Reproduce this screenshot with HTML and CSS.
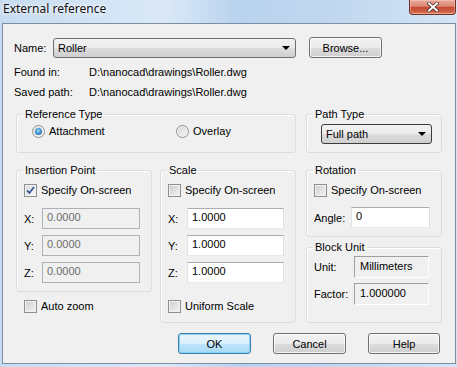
FILE: index.html
```html
<!DOCTYPE html>
<html>

<head>
    <title>External reference</title>
    <link rel="stylesheet" href="styles.css">
</head>

<body>
    <div class="window">
        <div class="titlebar">
            <span class="title">External reference</span>
            <button class="close-btn" title="Close">
                <svg width="12" height="10" viewBox="0 0 12 10">
                    <path d="M2 1.5 L10 8.5 M10 1.5 L2 8.5" stroke="#4a2a24" stroke-width="3.6" stroke-linecap="square" />
                    <path d="M2 1.5 L10 8.5 M10 1.5 L2 8.5" stroke="#ffffff" stroke-width="2" stroke-linecap="square" />
                </svg>
            </button>
        </div>

        <div class="panel">
            <div class="name-row">
                <label class="name-label">Name:</label>
                <div class="combo name-combo">
                    <span>Roller</span>
                    <i class="arrow"></i>
                </div>
                <button class="btn browse-btn">Browse...</button>
            </div>

            <div class="info-row found-row">
                <span class="info-label">Found in:</span>
                <span>D:\nanocad\drawings\Roller.dwg</span>
            </div>
            <div class="info-row">
                <span class="info-label">Saved path:</span>
                <span>D:\nanocad\drawings\Roller.dwg</span>
            </div>

            <div class="top-groups">
                <fieldset class="group ref-type">
                    <legend>Reference Type</legend>
                    <div class="radio-row">
                        <label class="radio attach"><span class="radio-dot checked"></span>Attachment</label>
                        <label class="radio"><span class="radio-dot"></span>Overlay</label>
                    </div>
                </fieldset>
                <fieldset class="group path-type">
                    <legend>Path Type</legend>
                    <div class="combo path-combo">
                        <span>Full path</span>
                        <i class="arrow"></i>
                    </div>
                </fieldset>
            </div>

            <div class="lower-groups">
                <div class="column">
                    <fieldset class="group insertion">
                        <legend>Insertion Point</legend>
                        <label class="check-row"><span class="checkbox checked"><svg width="9" height="9" viewBox="0 0 9 9"><path d="M1 4.5 L3.5 7 L8 1" fill="none" stroke="#3d5a98" stroke-width="1.8" /></svg></span>Specify On-screen</label>
                        <div class="coord-row"><span class="coord-label">X:</span><input class="field disabled" value="0.0000" disabled></div>
                        <div class="coord-row"><span class="coord-label">Y:</span><input class="field disabled" value="0.0000" disabled></div>
                        <div class="coord-row"><span class="coord-label">Z:</span><input class="field disabled" value="0.0000" disabled></div>
                    </fieldset>
                    <label class="check-row auto-zoom"><span class="checkbox"></span>Auto zoom</label>
                </div>

                <fieldset class="group scale">
                    <legend>Scale</legend>
                    <label class="check-row"><span class="checkbox"></span>Specify On-screen</label>
                    <div class="coord-row"><span class="coord-label">X:</span><input class="field" value="1.0000"></div>
                    <div class="coord-row"><span class="coord-label">Y:</span><input class="field" value="1.0000"></div>
                    <div class="coord-row"><span class="coord-label">Z:</span><input class="field" value="1.0000"></div>
                    <label class="check-row uniform"><span class="checkbox"></span>Uniform Scale</label>
                </fieldset>

                <div class="column">
                    <fieldset class="group rotation">
                        <legend>Rotation</legend>
                        <label class="check-row"><span class="checkbox"></span>Specify On-screen</label>
                        <div class="coord-row"><span class="angle-label">Angle:</span><input class="field angle-field" value="0"></div>
                    </fieldset>
                    <fieldset class="group block-unit">
                        <legend>Block Unit</legend>
                        <div class="unit-row"><span class="unit-label">Unit:</span><span class="static-field">Millimeters</span></div>
                        <div class="unit-row"><span class="unit-label">Factor:</span><span class="static-field">1.000000</span></div>
                    </fieldset>
                </div>
            </div>

            <div class="buttons">
                <button class="btn default-btn">OK</button>
                <button class="btn">Cancel</button>
                <button class="btn help-btn">Help</button>
            </div>
        </div>
    </div>
</body>

</html>
```

FILE: styles.css
```css
* {
    margin: 0;
    padding: 0;
    box-sizing: border-box;
}

body {
    font-family: "Liberation Sans", Arial, sans-serif;
    font-size: 11px;
    color: #000;
    background: #c4daf1;
    width: 457px;
    height: 367px;
    overflow: hidden;
}

.window {
    width: 457px;
    height: 367px;
    background: linear-gradient(90deg, #c7dcf1 0%, #d6e6f6 28%, #dbe9f7 36%, #b9d3ee 52%, #c0d7ef 72%, #d3e4f5 100%);
}

.titlebar {
    height: 23px;
    display: flex;
    align-items: flex-start;
    justify-content: space-between;
}

.title {
    font-family: "Noto Sans", "Open Sans", sans-serif;
    font-size: 12px;
    line-height: 18px;
    margin-left: 3px;
    color: #111;
    text-shadow: 0 0 6px #fff, 0 0 3px #fff;
}

.close-btn {
    width: 47px;
    height: 15px;
    margin-right: 1px;
    border: 1px solid #6e2f25;
    border-top: none;
    border-radius: 0 0 4px 4px;
    background: linear-gradient(#e8aa9b 0%, #dc8572 45%, #c54a31 52%, #cf5f44 85%, #e08a6f 100%);
    box-shadow: inset 0 0 0 1px rgba(255, 210, 200, 0.45);
    display: flex;
    align-items: center;
    justify-content: center;
}

.panel {
    margin-left: 2px;
    width: 454px;
    height: 341px;
    border: 1px solid #7e8fa3;
    background: #f0f0f0;
}

/* name + browse */
.name-row {
    display: flex;
    align-items: center;
    margin: 13px 0 0 11px;
    height: 21px;
}

.name-label {
    width: 39px;
}

.combo {
    display: flex;
    align-items: center;
    justify-content: space-between;
    height: 20px;
    padding: 0 5px 0 4px;
    border: 1px solid #707070;
    border-radius: 3px;
    background: linear-gradient(#f2f2f2 0%, #ebebeb 50%, #dddddd 51%, #cfcfcf 100%);
}

.name-combo {
    width: 243px;
}

.arrow {
    width: 0;
    height: 0;
    border-left: 4px solid transparent;
    border-right: 4px solid transparent;
    border-top: 4px solid #000;
}

.btn {
    font-family: inherit;
    font-size: 11px;
    color: #000;
    width: 73px;
    height: 21px;
    border: 1px solid #707070;
    border-radius: 3px;
    background: linear-gradient(#f2f2f2 0%, #ebebeb 50%, #dddddd 51%, #cfcfcf 100%);
    box-shadow: inset 0 0 0 1px rgba(255, 255, 255, 0.7);
}

.browse-btn {
    margin-left: 13px;
}

.info-row {
    display: flex;
    margin-left: 11px;
    line-height: 20px;
}

.found-row {
    margin-top: 4px;
}

.info-label {
    width: 75px;
}

/* group boxes */
.group {
    border: 1px solid #d5dfe5;
    border-radius: 3px;
    box-shadow: inset 1px 1px 0 #fff;
    min-width: 0;
}

.group legend {
    line-height: 14px;
    margin-left: 6px;
    padding: 0 2px;
}

.top-groups {
    display: flex;
    margin: 5px 0 0 13px;
}

.ref-type {
    width: 280px;
    height: 46px;
}

.path-type {
    width: 136px;
    height: 46px;
    margin-left: 10px;
}

.radio-row {
    display: flex;
    height: 20px;
    align-items: center;
    padding-left: 15px;
}

.radio {
    display: flex;
    align-items: center;
    gap: 4px;
}

.radio.attach {
    width: 144px;
}

.radio-dot {
    width: 13px;
    height: 13px;
    border-radius: 50%;
    border: 1px solid #8e8f8f;
    background: linear-gradient(135deg, #d4d4d4, #f8f8f8);
    box-shadow: inset 0 0 0 1px #f4f4f4;
    display: flex;
    align-items: center;
    justify-content: center;
}

.radio-dot.checked::after {
    content: "";
    width: 7px;
    height: 7px;
    border-radius: 50%;
    background: radial-gradient(circle at 45% 40%, #a7def8 0%, #3b8ed0 50%, #194f88 100%);
}

.path-combo {
    width: 111px;
    margin: 3px 0 0 14px;
    border-color: #3c3c3c;
}

/* lower part */
.lower-groups {
    display: flex;
    align-items: flex-start;
    margin: 10px 0 0 13px;
}

.column {
    display: flex;
    flex-direction: column;
}

.insertion {
    width: 136px;
    height: 129px;
}

.scale {
    width: 136px;
    height: 160px;
    margin: 0 10px 0 8px;
}

.check-row {
    display: flex;
    align-items: center;
    gap: 4px;
    height: 20px;
    margin: 3px 0 0 7px;
}

.checkbox {
    width: 13px;
    height: 13px;
    border: 1px solid #8e8f8f;
    background: #fff;
    box-shadow: inset 0 0 0 1px #f4f4f4;
    display: flex;
    align-items: center;
    justify-content: center;
}

.checkbox::before {
    content: "";
    display: none;
}

.checkbox:not(.checked) {
    background: linear-gradient(135deg, #cbcbcb, #f6f6f6);
    box-shadow: inset 0 0 0 1px #f2f2f2;
}

.checkbox.checked {
    background: linear-gradient(135deg, #d9d9d9, #f8f8f8);
}

.auto-zoom {
    margin: 4px 0 0 8px;
}

.uniform {
    margin-top: 13px;
}

.coord-row {
    display: flex;
    align-items: center;
    margin: 6px 0 0 7px;
}

.check-row + .coord-row {
    margin-top: 8px;
}

.coord-label {
    width: 18px;
}

.scale .coord-label {
    width: 19px;
}

.field {
    font-family: inherit;
    font-size: 11px;
    color: #000;
    width: 98px;
    height: 21px;
    padding: 0 0 3px 4px;
    border: 1px solid #abadb3;
    border-color: #abadb3 #dbdfe6 #e3e9ef #e2e3ea;
    background: #fff;
    outline: none;
}

.scale .field {
    width: 97px;
}

.field.disabled {
    color: #6d6d6d;
    background: #f0f0f0;
    border-color: #adb2b5;
}

.rotation {
    width: 136px;
    height: 74px;
}

.angle-label {
    width: 37px;
}

.angle-field {
    width: 79px;
}

.rotation .coord-row {
    margin-top: 7px;
}

.block-unit {
    width: 136px;
    height: 83px;
    margin-top: 3px;
}

.unit-row {
    display: flex;
    align-items: center;
    margin: 2px 0 5px 7px;
}

.unit-label {
    width: 40px;
}

.static-field {
    width: 75px;
    height: 22px;
    padding: 0 0 3px 5px;
    display: flex;
    align-items: center;
    border: 1px solid;
    border-color: #a0a0a0 #fff #fff #a0a0a0;
}

/* bottom buttons */
.buttons {
    display: flex;
    margin: 10px 0 0 175px;
}

.buttons .btn + .btn {
    margin-left: 22px;
}

.buttons .help-btn {
    margin-left: 21px;
    width: 72px;
}

.default-btn {
    border-color: #3c7fb1;
    background: linear-gradient(#eaf6fd 0%, #d9f0fc 50%, #bee6fd 51%, #a7d9f5 100%);
    box-shadow: inset 0 0 0 1px #8ed0f3;
}
```
